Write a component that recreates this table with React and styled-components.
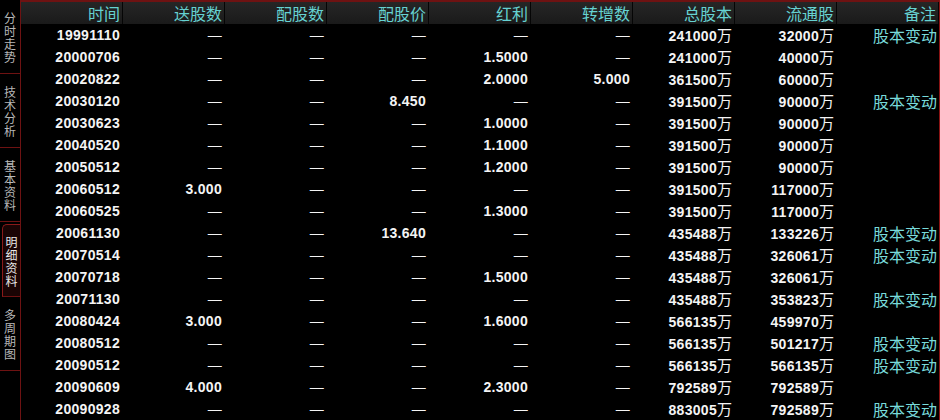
import React from 'react'
import styled, { createGlobalStyle } from 'styled-components'

const GlobalStyle = createGlobalStyle`
  html, body {
    margin: 0;
    padding: 0;
    background: #000;
  }
`

const columns = ['时间', '送股数', '配股数', '配股价', '红利', '转增数', '总股本', '流通股', '备注']

const rows = [
  ['19991110', '—', '—', '—', '—', '—', '241000万', '32000万', '股本变动'],
  ['20000706', '—', '—', '—', '1.5000', '—', '241000万', '40000万', ''],
  ['20020822', '—', '—', '—', '2.0000', '5.000', '361500万', '60000万', ''],
  ['20030120', '—', '—', '8.450', '—', '—', '391500万', '90000万', '股本变动'],
  ['20030623', '—', '—', '—', '1.0000', '—', '391500万', '90000万', ''],
  ['20040520', '—', '—', '—', '1.1000', '—', '391500万', '90000万', ''],
  ['20050512', '—', '—', '—', '1.2000', '—', '391500万', '90000万', ''],
  ['20060512', '3.000', '—', '—', '—', '—', '391500万', '117000万', ''],
  ['20060525', '—', '—', '—', '1.3000', '—', '391500万', '117000万', ''],
  ['20061130', '—', '—', '13.640', '—', '—', '435488万', '133226万', '股本变动'],
  ['20070514', '—', '—', '—', '—', '—', '435488万', '326061万', '股本变动'],
  ['20070718', '—', '—', '—', '1.5000', '—', '435488万', '326061万', ''],
  ['20071130', '—', '—', '—', '—', '—', '435488万', '353823万', '股本变动'],
  ['20080424', '3.000', '—', '—', '1.6000', '—', '566135万', '459970万', ''],
  ['20080512', '—', '—', '—', '—', '—', '566135万', '501217万', '股本变动'],
  ['20090512', '—', '—', '—', '—', '—', '566135万', '566135万', '股本变动'],
  ['20090609', '4.000', '—', '—', '2.3000', '—', '792589万', '792589万', ''],
  ['20090928', '—', '—', '—', '—', '—', '883005万', '792589万', '股本变动'],
]

const tabs = [
  { label: '分时走势' },
  { label: '技术分析' },
  { label: '基本资料' },
  { label: '明细资料', active: true },
  { label: '多周期图' },
]

// splits "241000万" into number and unit so the unit can be drawn in the CJK face
function Value({ v }) {
  if (v.endsWith('万')) {
    return (
      <>
        {v.slice(0, -1)}
        <Unit>万</Unit>
      </>
    )
  }
  return v
}

export default function App() {
  return (
    <>
      <GlobalStyle />
      <Screen>
        <Sidebar>
          {tabs.map((t) => (
            <Tab key={t.label} $active={t.active}>
              <TabLabel $active={t.active}>{t.label}</TabLabel>
            </Tab>
          ))}
        </Sidebar>
        <Table>
          <HeaderRow>
            {columns.map((c) => (
              <HeadCell key={c}>{c}</HeadCell>
            ))}
          </HeaderRow>
          {rows.map((r) => (
            <Row key={r[0]}>
              {r.map((v, i) =>
                i === 8 ? (
                  <NoteCell key={i}>{v}</NoteCell>
                ) : (
                  <Cell key={i} $dash={v === '—'}>
                    <Value v={v} />
                  </Cell>
                )
              )}
            </Row>
          ))}
        </Table>
      </Screen>
    </>
  )
}

const Screen = styled.div`
  display: flex;
  width: 940px;
  height: 420px;
  background: #000;
  overflow: hidden;
`

const Sidebar = styled.div`
  width: 20px;
  flex: none;
  border-right: 1px solid #6e1212;
  display: flex;
  flex-direction: column;
`

const Tab = styled.div`
  height: ${(p) => (p.$active ? '73px' : '74px')};
  margin-top: ${(p) => (p.$active ? '2px' : '0')};
  margin-left: ${(p) => (p.$active ? '2px' : '0')};
  box-sizing: border-box;
  display: flex;
  align-items: center;
  justify-content: center;
  border-bottom: 1px solid #6e1212;
  border-left: ${(p) => (p.$active ? '1px solid #8a1a1a' : 'none')};
  border-top: ${(p) => (p.$active ? '1px solid #8a1a1a' : 'none')};
  border-top-left-radius: ${(p) => (p.$active ? '5px' : '0')};
  background: ${(p) => (p.$active ? '#1a0404' : 'transparent')};
`

const TabLabel = styled.div`
  width: 12px;
  word-break: break-all;
  font-family: 'Noto Sans CJK SC', sans-serif;
  font-size: 12px;
  line-height: 13px;
  color: ${(p) => (p.$active ? '#e8e8e8' : '#b8b8b8')};
`

const Table = styled.div`
  width: 918px;
  border-right: 1px solid #8a1414;
  display: flex;
  flex-direction: column;
`

const grid = `
  display: grid;
  grid-template-columns: repeat(9, 102px);
`

const HeaderRow = styled.div`
  ${grid}
  height: 24px;
  box-sizing: border-box;
  border-top: 2px solid #6e1212;
  background: linear-gradient(#262626, #1a1a1a);
`

const HeadCell = styled.div`
  border-right: 1px solid #050505;
  padding-right: 2px;
  text-align: right;
  font-family: 'Noto Sans CJK SC', sans-serif;
  font-size: 16px;
  line-height: 22px;
  color: #66d2d2;
`

const Row = styled.div`
  ${grid}
  height: 22px;
`

const Cell = styled.div`
  padding-right: 3px;
  text-align: right;
  font-family: 'Liberation Sans', 'Noto Sans CJK SC', sans-serif;
  font-weight: ${(p) => (p.$dash ? 400 : 700)};
  font-size: 14px;
  letter-spacing: 0.3px;
  line-height: 22px;
  color: #f4f4f4;
  white-space: nowrap;
`

const Unit = styled.span`
  font-family: 'Noto Sans CJK SC', sans-serif;
  font-weight: 400;
  font-size: 15px;
  letter-spacing: 0;
`

const NoteCell = styled.div`
  padding-right: 2px;
  text-align: right;
  font-family: 'Noto Sans CJK SC', sans-serif;
  font-size: 16px;
  line-height: 22px;
  color: #78dada;
`
